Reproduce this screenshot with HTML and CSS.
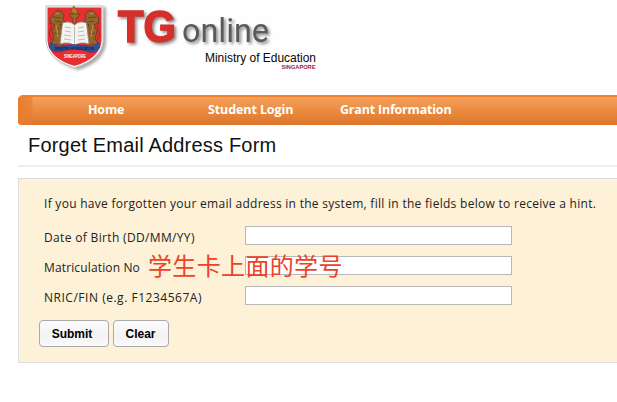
FILE: index.html
```
<!DOCTYPE html>
<html lang="en">
<head>
<meta charset="utf-8">
<title>TG Online</title>
<link rel="stylesheet" href="styles.css">
</head>
<body>
<header class="masthead">
<svg class="crest" width="66" height="72" viewBox="0 0 66 72" aria-hidden="true">
  <path class="shield-shadow" d="M5 7H62V42Q61 62 34 70Q6 62 5 42Z"/>
  <path d="M2.500 6.500H58.500V41Q57 59 30.500 67Q4 59 2.500 41Z" fill="#e52f32" stroke="#fff" stroke-width="2"/>
  <path d="M2 6H59V41Q57.500 59.500 30.500 67.500Q3.500 59.500 2 41Z" fill="none" stroke="#a5a5a5" stroke-width=".7"/>
  <g id="lion" fill="#94652b" stroke="#623b20" stroke-width=".8">
    <path d="M9 15L12 11L17 11L20 15L19 20L22 22L21 25L16 24L18 31L17 37L21 42L19 46L12 44L8 47L6 44L10 39L8 31L11 25L7 23L6 19Z"/>
    <path d="M9 41Q3 35 7 29Q9 25 6 23M9 17L17 18M11 21L18 22M12 27L16 30M10 33L16 34" fill="none"/>
    <path d="M11 13L15 14M12 25L14 37" stroke="#cfa055" fill="none"/>
  </g>
  <use href="#lion" transform="translate(61 0) scale(-1 1)"/>
  <path d="M25 14H36L33 18H32V24H29V18H28Z" fill="#98702b" stroke="#65401d" stroke-width=".8"/>
  <path d="M28 13Q26 10 30 6Q31 9 33 10Q35 12 32 14Z" fill="#b67b28" stroke="#714421" stroke-width=".6"/>
  <path d="M18.500 23Q26 20 30.500 25Q35 20 42.500 23L45 44Q35 41 30.500 46Q26 41 16 44Z" fill="#f5f3ee" stroke="#8d8580" stroke-width=".8"/>
  <path d="M30.500 26V45M21 27L27 28M21 31L27 32M20 35L27 36M20 39L27 40M40 27L34 28M40 31L34 32M41 35L34 36M41 39L34 40" stroke="#b5b3b0" fill="none" stroke-width=".9"/>
  <path d="M7 42Q13 49 20 46Q30 43 41 46Q49 49 54 42L56 47Q51 55 42 51Q31 47 19 51Q10 54 5 47Z" fill="#315299" stroke="#213d7a" stroke-width=".6"/>
  <text class="motto" x="11" y="49.500" textLength="39" lengthAdjust="spacingAndGlyphs">MINISTRY OF EDUCATION</text>
  <text class="crest-name" x="20" y="58" textLength="22" lengthAdjust="spacingAndGlyphs">SINGAPORE</text>
</svg>
<svg class="wordmark" width="207" height="75" viewBox="0 0 207 75" role="img" aria-label="TG online Ministry of Education Singapore">
  <rect x="0" y="5" width="207" height="67" fill="#fefefe"/>
  <g class="raised">
    <text class="tg" x="8" y="41.500" textLength="58" lengthAdjust="spacingAndGlyphs">TG</text>
    <text class="online" x="72" y="41.500" textLength="87" lengthAdjust="spacingAndGlyphs">online</text>
  </g>
  <text class="ministry" x="95" y="62" textLength="111" lengthAdjust="spacingAndGlyphs">Ministry of Education</text>
  <text class="country" x="171.500" y="69" textLength="34" lengthAdjust="spacingAndGlyphs">SINGAPORE</text>
</svg>
</header>
<nav class="nav">
  <a class="home">Home</a>
  <a class="login">Student Login</a>
  <a class="grant">Grant Information</a>
</nav>
<h1 class="title">Forget Email Address Form</h1>
<form class="panel">
  <p class="intro">If you have forgotten your email address in the system, fill in the fields below to receive a hint.</p>
  <div class="row"><label class="dob" for="dob">Date of Birth (DD/MM/YY)</label><input id="dob" type="text"></div>
  <div class="row"><label class="matric" for="matric">Matriculation No</label><input id="matric" type="text"><span class="note" lang="zh">学生卡上面的学号</span></div>
  <div class="row"><label class="nric" for="nric">NRIC/FIN (e.g. F1234567A)</label><input id="nric" type="text"></div>
  <div class="actions"><button class="submit" type="button">Submit</button><button class="clear" type="button">Clear</button></div>
</form>
</body>
</html>
```
FILE: styles.css
```
* { box-sizing: border-box; }
body { margin: 0; height: 402px; overflow: hidden; background: #fff; color: #222; font-family: "Open Sans", "Noto Sans", sans-serif; }
.masthead { display: flex; height: 95px; padding-left: 44px; }
.crest, .wordmark { flex: none; display: block; }
.shield-shadow { fill: #777; opacity: .65; filter: blur(1.5px); }
.motto { font: bold 4px "Liberation Sans", sans-serif; fill: #111e52; }
.crest-name { font: bold 4.5px "Liberation Sans", sans-serif; fill: #fff; }
.raised { filter: drop-shadow(2px 2px 1.5px rgba(0, 0, 0, .45)); }
.tg { font: bold 44px "Liberation Sans", sans-serif; fill: #d53029; stroke: #d53029; stroke-width: 1.6; }
.online { font: 33px Roboto, sans-serif; fill: #5a5a5a; }
.ministry { font: 12px "Liberation Sans", sans-serif; fill: #050505; }
.country { font: bold 4.8px "Liberation Sans", sans-serif; fill: #a12343; }
.nav { display: flex; height: 30px; margin-left: 18px; border-top: 2px solid #ef7f2c; border-radius: 5px 0 0 4px; background: linear-gradient(90deg, #e87d2e 0, #e87d2e99 14px, transparent 15px), linear-gradient(#f4a15c, #ea8b40 50%, #db762a); color: #fff; font-size: 12.5px; font-weight: 700; line-height: 25px; white-space: nowrap; }
.home { width: 120px; margin-left: 70px; letter-spacing: -.2px; }
.login { width: 132px; letter-spacing: -.1px; }
.grant { letter-spacing: -.2px; }
.title { height: 42px; margin: 0 0 11px 18px; padding-left: 10px; border-bottom: 2px solid #eee; color: #111; font: 20px/41px "Liberation Sans", sans-serif; letter-spacing: .2px; white-space: nowrap; }
.panel { height: 185px; margin: 0 -2px 0 18px; padding: 14px 0 0 25px; border: 1px solid #ddd; background: #fdf1d7; }
.intro { height: 33px; margin: 0; font-size: 12px; line-height: 21px; letter-spacing: .285px; white-space: nowrap; }
.row { position: relative; display: flex; height: 30px; font-size: 12px; line-height: 23px; white-space: nowrap; }
.row label { width: 201px; }
.row .dob { letter-spacing: .34px; }
.row .matric { letter-spacing: .14px; }
.row .nric { letter-spacing: .52px; }
.row input { width: 267px; height: 19px; margin: 0; padding: 0 3px; border: 1px solid #b8b8b8; border-radius: 0; outline: 0; background: #fff; }
.note { position: absolute; left: 104px; top: -9px; color: #ef4128; font: 24px/36px "Noto Sans CJK SC", sans-serif; letter-spacing: .35px; }
.actions { display: flex; gap: 4px; margin: 4px 0 0 -5px; }
.actions button { height: 27px; margin: 0; padding: 0; border: 1px solid #aaa; border-radius: 4px; background: linear-gradient(#fbfbfb, #f3f3f3 60%, #fafafa); color: #000; font: bold 12px "Liberation Sans", sans-serif; }
.actions .submit { width: 70px; padding-right: 4px; }
.actions .clear { width: 56px; padding-right: 1px; }
```
